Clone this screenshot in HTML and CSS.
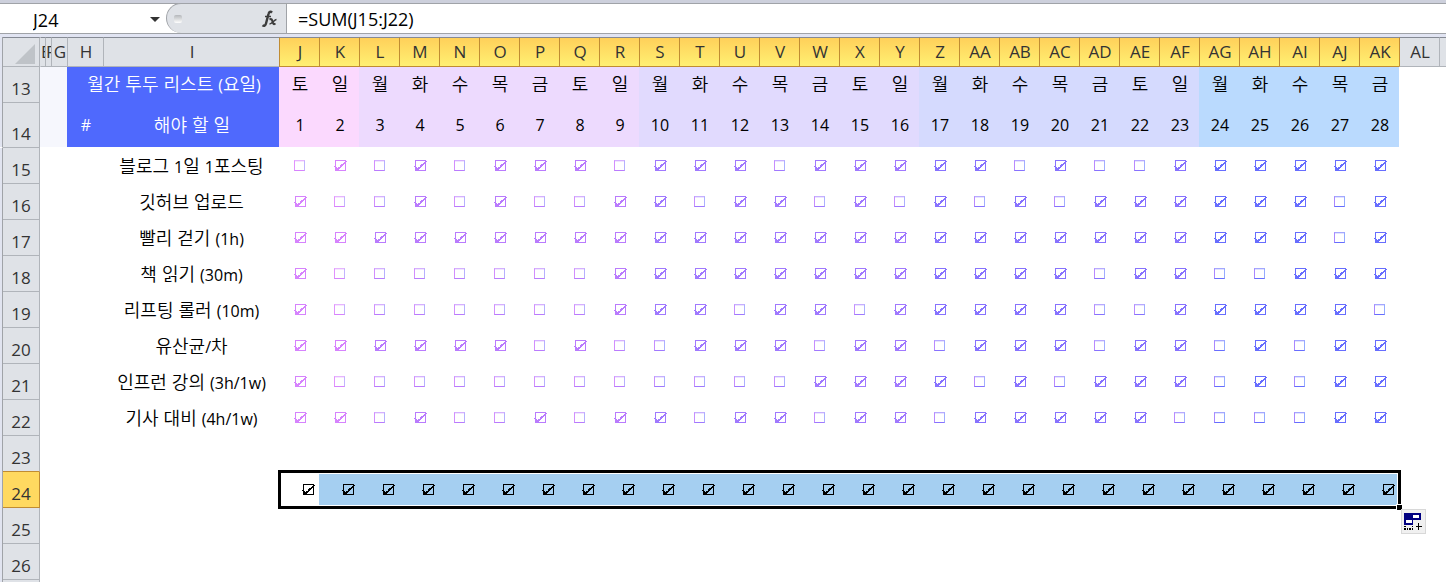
FILE: index.html
```html
<!DOCTYPE html>
<html lang="ko">
<head>
<meta charset="utf-8">
<title>월간 투두 리스트</title>
<link rel="stylesheet" href="styles.css">
</head>
<body>
<div class="app">
  <header class="formula-bar">
    <input class="name-box" type="text" value="J24" aria-label="이름 상자">
    <button class="name-menu" type="button" aria-label="이름 목록">
      <svg width="10" height="5" viewBox="0 0 10 5"><path d="M0 0h10L5 5z" fill="#333"/></svg>
    </button>
    <div class="function-area">
      <span class="grip"></span>
      <button class="fx" type="button" aria-label="함수 삽입">
        <svg width="18" height="18" viewBox="0 0 18 18" fill="none" stroke="#3c3c3c">
          <path d="M11 2.600C9.600 1 8 1.800 7.500 4L5 13.500C4.500 15.700 3 16.300 1.500 15.200" stroke-width="2.400"/>
          <path d="M4 6.500h6" stroke-width="1.500"/>
          <path d="M8.500 9.500c2-1 2.500 0 3 2s1 3.500 3 2" stroke-width="2"/>
          <path d="M15.500 9.500c-2 0-4.500 4.500-7 4.500" stroke-width="1.500"/>
        </svg>
      </button>
    </div>
    <input class="formula" type="text" value="=SUM(J15:J22)" aria-label="수식 입력줄">
  </header>
  <main class="sheet">
    <table class="grid">
      <colgroup id="cols"></colgroup>
      <thead><tr id="letters"></tr></thead>
      <tbody id="rows"></tbody>
    </table>
  </main>
</div>
<script src="sheet.js"></script>
</body>
</html>
```
FILE: styles.css
```css
* { box-sizing: border-box; }

:root {
  --col: 40px;
  --chrome: #dfe2e7;
  --line: #b0b4ba;
  --gold-line: #c08c32;
  --gold: #ffd960;
}

body {
  margin: 0;
  background: #fff;
  color: #000;
  font-family: "Open Sans", "Noto Sans CJK KR", sans-serif;
  font-size: 16px;
}

input, button { font: inherit; color: inherit; margin: 0; padding: 0; border: 0; background: none; }
button { display: flex; align-items: center; justify-content: center; }

.app { display: flex; flex-direction: column; height: 100vh; overflow: hidden; }

.formula-bar {
  display: flex;
  flex: none;
  height: 34px;
  border-top: 3px solid #cdd0dc;
  border-bottom: 1px solid #a0a3a8;
  box-shadow: inset 0 1px #a0a3a8;
  font-size: 18px;
}
.name-box { width: 144px; padding-left: 33px; padding-top: 3px; }
.name-menu { width: 22px; padding-top: 2px; }
.function-area {
  display: flex;
  align-items: center;
  justify-content: space-between;
  width: 121px;
  padding: 0 7px;
  background: var(--chrome);
  border: 1px solid #a0a3a8;
  border-bottom: 0;
  border-radius: 15px 0 0 15px;
}
.grip { width: 8px; height: 8px; border-radius: 2px; background: linear-gradient(#b4b7bb, #fff); }
.formula { flex: 1; min-width: 0; padding-left: 11px; padding-top: 1px; }

.sheet { flex: 1; min-height: 0; overflow: hidden; border-top: 3px solid #e1e4f2; }

.grid { table-layout: fixed; border-spacing: 0; width: 0; }
.c-gutter { width: 3px; }
.c-head { width: 37px; }
.c-e { width: 5px; }
.c-f { width: 6px; }
.c-g { width: 16px; }
.c-h { width: 36px; }
.c-i { width: 176px; }
.c-day { width: var(--col); }

th, td { padding: 0; font-weight: 400; text-align: center; line-height: 20px; white-space: nowrap; }

.gutter { background: #e1e4f0; border-right: 1px solid #a0a3a8; }

.letter {
  height: 30px;
  padding-left: 1px;
  overflow: hidden;
  background: var(--chrome);
  border-top: 1px solid #858a94;
  border-left: 1px solid var(--line);
  border-bottom: 1px solid var(--line);
  color: #333;
  font-size: 17px;
}
.letter.first { border-left-color: var(--chrome); }
.letter.narrow { padding: 0; text-align: left; text-overflow: clip; }
.letter.picked {
  background: linear-gradient(#ffd05a, #fff072);
  border-left-color: var(--gold-line);
  border-bottom-color: var(--gold-line);
}
.letter.after { border-left-color: var(--gold-line); }
.corner {
  background: var(--chrome);
  border-top: 1px solid #858a94;
  border-right: 1px solid var(--line);
  border-bottom: 1px solid var(--line);
  padding: 4px 4px 0 0;
}
.corner svg { display: block; margin-left: auto; }

.number {
  height: 36px;
  padding: 0 0 3px;
  vertical-align: bottom;
  background: var(--chrome);
  border-right: 1px solid var(--line);
  border-bottom: 1px solid var(--line);
  color: #333;
  font-size: 17px;
}
.number.tall { height: 45px; }
.number.before { border-bottom-color: var(--gold-line); }
.number.picked { background: var(--gold); border-color: var(--gold-line); }

.pale { background: #f6f7fd; }
.title { padding-left: 2px; background: #4f69fd; color: #fff; }
.dates td { border-bottom: 1px solid #fff; }
.task { padding-left: 1px; }
.ko { font-family: "Noto Sans CJK KR", sans-serif; font-size: 18px; font-weight: 350; }
.latin { font-family: "Open Sans", sans-serif; font-size: 16px; font-weight: 400; }

.w1 { --fill: #fbd9fe; --ink: #d683fd; }
.w2 { --fill: #eddafe; --ink: #b97bfd; }
.w3 { --fill: #e1dafe; --ink: #a079fe; }
.w4 { --fill: #d5dafe; --ink: #8772fe; }
.w5 { --fill: #badafe; --ink: #676dfe; }
.day { padding-left: 2px; background: var(--fill); }
.weekday { padding-bottom: 2px; }

.mark { padding: 0 0 1px 15px; }
.tick { display: block; appearance: none; width: 11px; height: 11px; }
.tick:not(:checked) {
  border: 1px solid var(--ink);
  border-top-color: color-mix(in srgb, var(--ink) 60%, #fff);
  border-left-color: color-mix(in srgb, var(--ink) 50%, #eba0ff);
  border-right-color: color-mix(in srgb, var(--ink) 40%, #b4d4ff);
  box-shadow: inset 0 1px color-mix(in srgb, var(--ink) 20%, #fff);
}
.tick:checked {
  width: 13px;
  background: var(--ink);
  mask: url("data:image/svg+xml,%3Csvg xmlns='http://www.w3.org/2000/svg' width='13' height='11' shape-rendering='crispEdges'%3E%3Cpath d='M1 0h11v1H1zM1 1h1v9H1zM11 1h1v9h-1zM1 10h11v1H1zM12 1h1v1h-1zM10 2h2v1h-2zM9 3h2v1H9zM7 4h3v1H7zM6 5h3v1H6zM0 6h2v1H0zM6 6h2v1H6zM1 7h2v1H1zM4 7h3v1H4zM1 8h5v1H1zM1 9h4v1H1z'/%3E%3C/svg%3E") no-repeat;
}

.total { --ink: #000; background: #a5cff1; padding: 0 4px 1px 0; }
.total .tick { margin-left: auto; }
.total.active { position: relative; background: #fff; }

/* Frame over the selected range, with its fill handle and options button */
.selection {
  position: absolute;
  top: -2px;
  left: -1px;
  width: calc(28 * var(--col) + 3px);
  height: 39px;
  border: 3px solid #000;
  box-shadow: inset 0 0 0 1px #fff;
  pointer-events: none;
}
.handle { position: absolute; right: -4px; bottom: -4px; width: 6px; height: 6px; background: #000; border: 1px solid #fff; border-width: 1px 0 0 1px; }
.fill-options {
  position: absolute;
  top: 36px;
  right: -28px;
  width: 25px;
  height: 25px;
  background: #f0f0f0;
  border: 1px solid #d8d8d8;
  pointer-events: auto;
}
```
FILE: sheet.js
```js
const weekOf = i => i < 2 ? 'w1' : i < 9 ? 'w2' : i < 16 ? 'w3' : i < 23 ? 'w4' : 'w5';
const days = Array.from({ length: 28 }, (_, i) => i);
const columnName = n => n < 26 ? String.fromCharCode(65 + n) : 'A' + String.fromCharCode(39 + n);
const korean = text => '<span class="ko">' +
  text.replace(/[0-9(][0-9a-z\/)]*|[\/)]/g, m => `<span class="latin">${m}</span>`) + '</span>';

const tasks = [
  ['블로그 1일 1포스팅', '0101011101110111110100111111'],
  ['깃허브 업로드', '1001010011011010101011111101'],
  ['빨리 걷기 (1h)', '1111111111111111111111111101'],
  ['책 읽기 (30m)', '1000000011111111111101100111'],
  ['리프팅 롤러 (10m)', '1000000011101101111100111110'],
  ['유산균/차', '1111110100111011011101101011'],
  ['인프런 강의 (3h/1w)', '1000000000000111101011101011'],
  ['기사 대비 (4h/1w)', '1101001011011011011111000011']
];

document.getElementById('cols').innerHTML =
  ['gutter', 'head', 'e', 'f', 'g', 'h', 'i', ...Array(30).fill('day')]
    .map(c => `<col class="c-${c}">`).join('');

let head = '<td class="gutter"></td><td class="corner"><svg width="20" height="20" viewBox="0 0 20 20"><path d="M20 0v20H0z" fill="#bfc3c8"/></svg></td>';
for (let n = 4; n < 39; n++) {
  const cls = n === 4 ? ' first narrow' : n === 5 ? ' narrow' : n >= 9 && n < 37 ? ' picked' : n === 37 ? ' after' : '';
  head += `<th class="letter${cls}" scope="col">${columnName(n)}</th>`;
}
document.getElementById('letters').innerHTML = head;

const row = (n, cells, cls = '') => {
  const mark = n === 14 ? ' tall' : n === 23 ? ' before' : n === 24 ? ' picked' : '';
  return `<tr class="${cls}"><td class="gutter"></td><th class="number${mark}" scope="row">${n}</th>${cells}</tr>`;
};

let html = row(13, '<td class="pale" colspan="3"></td><td class="title weekday" colspan="2">' +
  korean('월간 투두 리스트 (요일)') + '</td>' +
  days.map(i => `<td class="day weekday ${weekOf(i)}"><span class="ko">${'토일월화수목금'[i % 7]}</span></td>`).join(''));
html += row(14, '<td class="pale" colspan="3"></td><td class="title">#</td><td class="title">' +
  korean('해야 할 일') + '</td>' +
  days.map(i => `<td class="day ${weekOf(i)}">${i + 1}</td>`).join(''), 'dates');

tasks.forEach(([name, marks], r) => {
  html += row(15 + r, `<td colspan="4"></td><td class="task">${korean(name)}</td>` +
    days.map(i => `<td class="mark ${weekOf(i)}"><input class="tick" type="checkbox" aria-label="${name} ${i + 1}"${marks[i] === '1' ? ' checked' : ''}></td>`).join(''));
});

html += row(23, '');
const frame = `<div class="selection"><span class="handle"></span>
  <button class="fill-options" type="button" aria-label="자동 채우기 옵션">
    <svg width="19" height="19" viewBox="0 0 19 19" shape-rendering="crispEdges">
      <path d="M0 1h17v7H9v5H0z" fill="#000080"/>
      <path d="M9 3h6v3H9zM2 8h6v3H2z" fill="#fff"/>
      <path d="M0 14h2v1H0zM8 14h1v1H8zM0 16h2v2H0zM3 16h1v2H3zM5 16h2v2H5zM8 16h1v2H8zM12 14h6v1h-6zM14 11h1v7h-1z"/>
    </svg>
  </button></div>`;
html += row(24, '<td colspan="5"></td>' + days.map(i =>
  `<td class="total${i ? '' : ' active'}"><input class="tick" type="checkbox" aria-label="합계 ${i + 1}" checked>${i ? '' : frame}</td>`).join(''));
for (let n = 25; n < 28; n++) html += row(n, '');
document.getElementById('rows').innerHTML = html;
```
